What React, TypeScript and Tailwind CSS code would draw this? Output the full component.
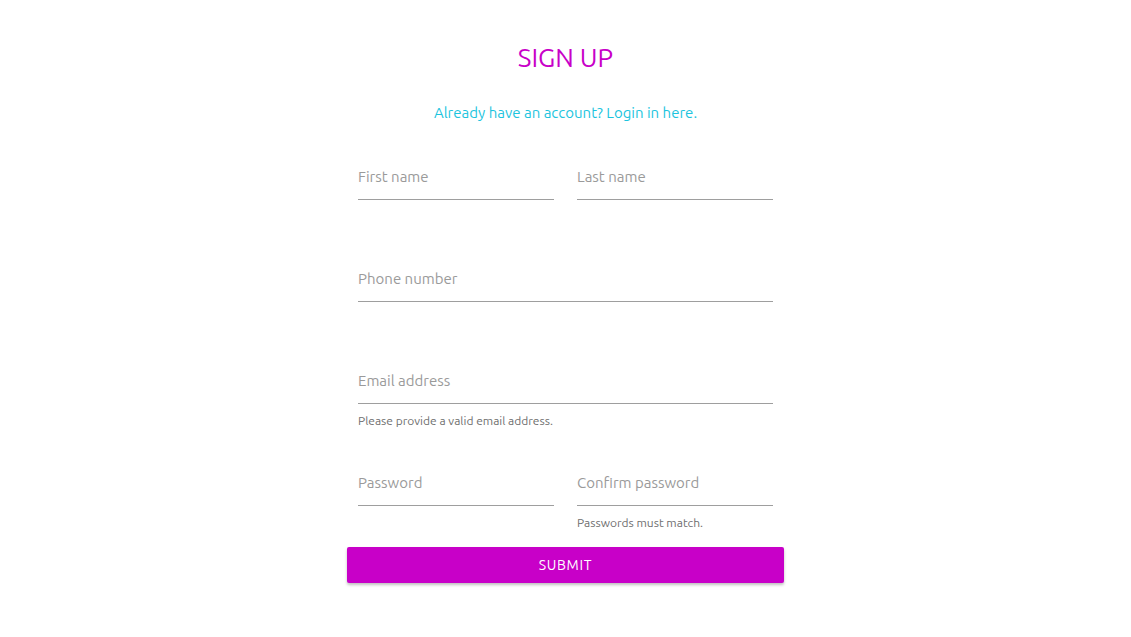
import React from "react";

function Field({ label, helper }: { label: string; helper?: string }) {
  return (
    <div className="flex-1 flex flex-col">
      <div className="h-[50px] pt-[16px] border-b border-[#9e9e9e]">
        <span className="block text-[15px] leading-[22px] text-[#9a9a9a]">{label}</span>
      </div>
      {helper && (
        <div className="mt-[9px] text-[12px] leading-[16px] text-[#6f6f6f]">{helper}</div>
      )}
    </div>
  );
}

export default function App() {
  return (
    <div
      className="min-h-screen bg-white flex flex-col items-center"
      style={{ fontFamily: "Ubuntu, 'Noto Sans', 'Open Sans', sans-serif" }}
    >
      <h1 className="mt-[42px] text-[26px] leading-[32px] text-[#c800c8]">SIGN UP</h1>
      <p className="mt-[28px] text-[15px] leading-[22px] text-[#1cc4de]">
        Already have an account? Login in here.
      </p>
      <form className="mt-[26px] w-[437px] flex flex-col">
        <div className="px-[11px]">
          <div className="h-[102px] flex gap-[23px]">
            <Field label="First name" />
            <Field label="Last name" />
          </div>
          <div className="h-[102px] flex">
            <Field label="Phone number" />
          </div>
          <div className="h-[102px] flex">
            <Field label="Email address" helper="Please provide a valid email address." />
          </div>
          <div className="h-[91px] flex gap-[23px]">
            <Field label="Password" />
            <Field label="Confirm password" helper="Passwords must match." />
          </div>
        </div>
        <button
          type="button"
          className="h-[36px] w-full rounded-[2px] bg-[#c800c8] text-white text-[14px] tracking-[0.05em] shadow-[0_2px_3px_rgba(0,0,0,0.25)]"
        >
          SUBMIT
        </button>
      </form>
    </div>
  );
}
